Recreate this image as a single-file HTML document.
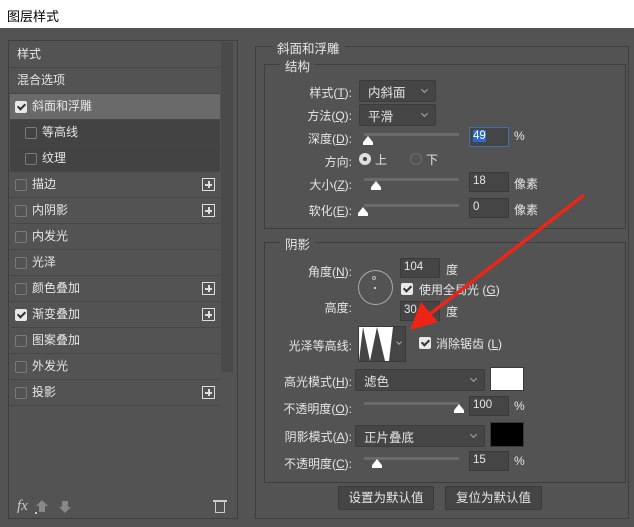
<!DOCTYPE html><html><head><meta charset="utf-8"><style>
*{box-sizing:border-box;margin:0;padding:0}
body{width:634px;height:527px;background:#535353;font-family:"Liberation Sans","Noto Sans CJK SC",sans-serif;font-size:12px;color:#e6e6e6;position:relative;overflow:hidden}
.a{position:absolute}
.title{left:0;top:0;width:634px;height:28px;background:#fff;color:#000;font-size:13px;padding:6px 7px}
.row{position:absolute;left:10px;width:210px;height:26px;border-bottom:1px solid #474747;line-height:25px}
.cb{position:absolute;width:12px;height:12px;border:1px solid #7a7a7a;border-radius:2px;top:7px}
.cbc{background:#e8e8e8;border-color:#e8e8e8}
.cbc::after{content:"";position:absolute;left:3px;top:0px;width:3px;height:6px;border:solid #333;border-width:0 2px 2px 0;transform:rotate(45deg)}
.plus{position:absolute;left:192px;top:6px;width:13px;height:13px;border:1px solid #ddd}
.plus::before{content:"";position:absolute;left:2px;top:5px;width:7px;height:1.5px;background:#ddd}
.plus::after{content:"";position:absolute;left:5px;top:2px;width:1.5px;height:7px;background:#ddd}
.grp{position:absolute;border:1px solid #3e3e3e}
.lg{position:absolute;background:#535353;padding:0 5px;font-size:12.5px}
.lbl{position:absolute;text-align:right;font-size:12px}
.sel{position:absolute;height:22px;background:#454545;border:1px solid #3c3c3c;border-radius:2px;padding:1px 8px;font-size:12.5px}
.sel::after{content:"";position:absolute;right:8px;top:6px;width:4px;height:4px;border:solid #aaa;border-width:0 1px 1px 0;transform:rotate(45deg)}
.track{position:absolute;height:3px;background:#6a6a6a}
.thumb{position:absolute;width:10px;height:9px;background:#fff;clip-path:polygon(50% 0,100% 70%,100% 100%,0 100%,0 70%)}
.inp{position:absolute;height:20px;width:40px;background:#454545;border:1px solid #3a3a3a;padding:2px 3px;font-size:11.5px}
.btn{position:absolute;height:24px;background:#454545;border:1px solid #3a3a3a;border-radius:2px;text-align:center;line-height:22px;font-size:12.5px}
</style></head><body>
<div class="a title">图层样式</div>
<div class="a" style="left:8px;top:40px;width:230px;height:479px;border:1px solid #3e3e3e"></div>
<div class="a" style="left:221px;top:42px;width:12px;height:330px;background:#4a4a4a"></div>
<div class="row" style="top:42px;padding-left:7px">样式</div>
<div class="row" style="top:68px;padding-left:7px">混合选项</div>
<div class="row" style="top:94px;background:#6a6a6a;padding-left:22px"><div class="cb cbc" style="left:5px"></div>斜面和浮雕</div>
<div class="row" style="top:120px;background:#434343;padding-left:32px"><div class="cb" style="left:15px"></div>等高线</div>
<div class="row" style="top:146px;background:#434343;padding-left:32px"><div class="cb" style="left:15px"></div>纹理</div>
<div class="row" style="top:172px;padding-left:22px"><div class="cb" style="left:5px"></div>描边<div class="plus"></div></div>
<div class="row" style="top:198px;padding-left:22px"><div class="cb" style="left:5px"></div>内阴影<div class="plus"></div></div>
<div class="row" style="top:224px;padding-left:22px"><div class="cb" style="left:5px"></div>内发光</div>
<div class="row" style="top:250px;padding-left:22px"><div class="cb" style="left:5px"></div>光泽</div>
<div class="row" style="top:276px;padding-left:22px"><div class="cb" style="left:5px"></div>颜色叠加<div class="plus"></div></div>
<div class="row" style="top:302px;padding-left:22px"><div class="cb cbc" style="left:5px"></div>渐变叠加<div class="plus"></div></div>
<div class="row" style="top:328px;padding-left:22px"><div class="cb" style="left:5px"></div>图案叠加</div>
<div class="row" style="top:354px;padding-left:22px"><div class="cb" style="left:5px"></div>外发光</div>
<div class="row" style="top:380px;padding-left:22px"><div class="cb" style="left:5px"></div>投影<div class="plus"></div></div>
<div class="a" style="left:17px;top:498px;font-style:italic;font-family:'Liberation Serif',serif;font-size:15px;color:#ccc">fx</div>
<div class="a" style="left:35px;top:512px;width:2px;height:2px;background:#ccc"></div>
<div class="a" style="left:36px;top:500px;width:0;height:0;border:6px solid transparent;border-bottom:6px solid #888;border-top:0"></div>
<div class="a" style="left:39px;top:506px;width:6px;height:6px;background:#888"></div>
<div class="a" style="left:62px;top:501px;width:6px;height:6px;background:#888"></div>
<div class="a" style="left:59px;top:507px;width:0;height:0;border:6px solid transparent;border-top:6px solid #888;border-bottom:0"></div>
<div class="a" style="left:215px;top:502px;width:10px;height:11px;border:1.5px solid #ccc;border-top:none"></div>
<div class="a" style="left:213px;top:500px;width:14px;height:2px;background:#ccc"></div>

<div class="grp" style="left:255px;top:46px;width:374px;height:473px"></div>
<div class="lg" style="left:272px;top:38px">斜面和浮雕</div>
<div class="grp" style="left:264px;top:64px;width:362px;height:165px"></div>
<div class="lg" style="left:280px;top:56px">结构</div>
<div class="lbl" style="left:270px;top:84px;width:82px">样式(<u>T</u>):</div>
<div class="sel" style="left:359px;top:80px;width:77px">内斜面</div>
<div class="lbl" style="left:270px;top:107px;width:82px">方法(<u>Q</u>):</div>
<div class="sel" style="left:359px;top:104px;width:77px">平滑</div>
<div class="lbl" style="left:270px;top:130px;width:82px">深度(<u>D</u>):</div>
<div class="track" style="left:364px;top:133px;width:95px"></div>
<div class="thumb" style="left:363px;top:136px"></div>
<div class="inp" style="left:469px;top:127px;border-color:#3f6fb5"><span style="background:#2a6ad0;color:#fff">49</span></div>
<div class="a" style="left:514px;top:129px">%</div>
<div class="lbl" style="left:270px;top:153px;width:82px">方向:</div>
<div class="a" style="left:359px;top:153px;width:12px;height:12px;border-radius:50%;background:#e0e0e0"><div class="a" style="left:4px;top:4px;width:4px;height:4px;border-radius:50%;background:#444"></div></div>
<div class="a" style="left:375px;top:151px">上</div>
<div class="a" style="left:410px;top:153px;width:12px;height:12px;border-radius:50%;border:1px solid #6e6e6e"></div>
<div class="a" style="left:426px;top:151px">下</div>
<div class="lbl" style="left:270px;top:176px;width:82px">大小(<u>Z</u>):</div>
<div class="track" style="left:364px;top:178px;width:95px"></div>
<div class="thumb" style="left:371px;top:181px"></div>
<div class="inp" style="left:469px;top:172px">18</div>
<div class="a" style="left:514px;top:175px">像素</div>
<div class="lbl" style="left:270px;top:202px;width:82px">软化(<u>E</u>):</div>
<div class="track" style="left:364px;top:204px;width:95px"></div>
<div class="thumb" style="left:358px;top:207px"></div>
<div class="inp" style="left:469px;top:198px">0</div>
<div class="a" style="left:514px;top:201px">像素</div>

<div class="grp" style="left:264px;top:242px;width:362px;height:241px"></div>
<div class="lg" style="left:280px;top:234px">阴影</div>
<div class="lbl" style="left:270px;top:263px;width:82px">角度(<u>N</u>):</div>
<div class="a" style="left:358px;top:270px;width:35px;height:35px;border-radius:50%;border:1px solid #aaa"></div>
<div class="a" style="left:374px;top:287px;width:2px;height:2px;background:#ccc"></div>
<div class="a" style="left:372px;top:276px;width:4px;height:4px;border-radius:50%;border:1px solid #bbb"></div>
<div class="inp" style="left:400px;top:258px">104</div>
<div class="a" style="left:446px;top:261px">度</div>
<div class="cb cbc" style="left:401px;top:283px"></div>
<div class="a" style="left:419px;top:281px">使用全局光 (<u>G</u>)</div>
<div class="lbl" style="left:270px;top:299px;width:82px">高度:</div>
<div class="inp" style="left:400px;top:301px">30</div>
<div class="a" style="left:446px;top:303px">度</div>
<div class="lbl" style="left:270px;top:337px;width:82px">光泽等高线:</div>
<div class="a" style="left:358px;top:326px;width:48px;height:36px;border:1px solid #3a3a3a;background:#454545"></div>
<svg class="a" style="left:359px;top:327px" width="34" height="34"><rect width="34" height="34" fill="#fff"/><path d="M0 34 L4 0 L11 34 L18 0 L26 34 Z" fill="#444"/><path d="M30 34 L34 0 L34 34Z" fill="#444"/></svg>
<div class="a" style="left:397px;top:340px;width:4px;height:4px;border:solid #aaa;border-width:0 1px 1px 0;transform:rotate(45deg)"></div>
<div class="cb cbc" style="left:419px;top:337px"></div>
<div class="a" style="left:436px;top:335px">消除锯齿 (<u>L</u>)</div>
<div class="lbl" style="left:270px;top:373px;width:82px">高光模式(<u>H</u>):</div>
<div class="sel" style="left:355px;top:369px;width:130px">滤色</div>
<div class="a" style="left:490px;top:367px;width:34px;height:24px;background:#fff;border:1px solid #3a3a3a"></div>
<div class="lbl" style="left:270px;top:400px;width:82px">不透明度(<u>O</u>):</div>
<div class="track" style="left:364px;top:402px;width:95px"></div>
<div class="thumb" style="left:454px;top:404px"></div>
<div class="inp" style="left:469px;top:396px">100</div>
<div class="a" style="left:514px;top:399px">%</div>
<div class="lbl" style="left:270px;top:428px;width:82px">阴影模式(<u>A</u>):</div>
<div class="sel" style="left:355px;top:425px;width:130px">正片叠底</div>
<div class="a" style="left:490px;top:422px;width:34px;height:25px;background:#000;border:1px solid #3a3a3a"></div>
<div class="lbl" style="left:270px;top:455px;width:82px">不透明度(<u>C</u>):</div>
<div class="track" style="left:364px;top:457px;width:95px"></div>
<div class="thumb" style="left:372px;top:459px"></div>
<div class="inp" style="left:469px;top:451px">15</div>
<div class="a" style="left:514px;top:454px">%</div>
<div class="btn" style="left:338px;top:486px;width:96px">设置为默认值</div>
<div class="btn" style="left:445px;top:486px;width:97px">复位为默认值</div>
<svg class="a" style="left:0;top:0" width="634" height="527"><line x1="584" y1="195" x2="430" y2="314" stroke="#f02416" stroke-width="3.5"/><polygon points="410,330 421,302 438,322" fill="#f02416"/></svg>
</body></html>
